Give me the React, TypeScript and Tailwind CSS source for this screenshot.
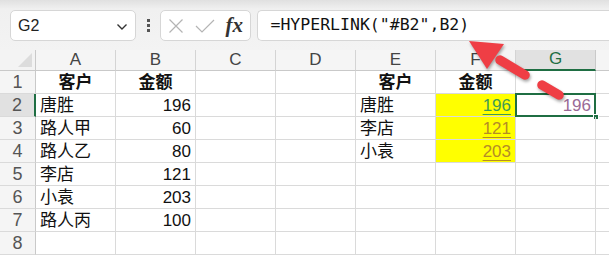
import React from 'react'

type Cell = {
  text?: string
  align?: 'left' | 'right' | 'center'
  bold?: boolean
  color?: string
  underline?: boolean
  fill?: string
  selected?: boolean
}

const cols = ['A', 'B', 'C', 'D', 'E', 'F', 'G']

const L = (text: string): Cell => ({ text, align: 'left' })
const R = (text: string): Cell => ({ text, align: 'right' })
const H = (text: string): Cell => ({ text, align: 'center', bold: true })

const rows: Cell[][] = [
  [H('客户'), H('金额'), {}, {}, H('客户'), H('金额'), {}],
  [
    L('唐胜'),
    R('196'),
    {},
    {},
    L('唐胜'),
    { text: '196', align: 'right', color: 'text-[#3f9a56]', underline: true, fill: 'bg-[#ffff00]' },
    { text: '196', align: 'right', color: 'text-[#9a6a96]', selected: true },
  ],
  [
    L('路人甲'),
    R('60'),
    {},
    {},
    L('李店'),
    { text: '121', align: 'right', color: 'text-[#b58c26]', underline: true, fill: 'bg-[#ffff00]' },
    {},
  ],
  [
    L('路人乙'),
    R('80'),
    {},
    {},
    L('小袁'),
    { text: '203', align: 'right', color: 'text-[#b58c26]', underline: true, fill: 'bg-[#ffff00]' },
    {},
  ],
  [L('李店'), R('121'), {}, {}, {}, {}, {}],
  [L('小袁'), R('203'), {}, {}, {}, {}, {}],
  [L('路人丙'), R('100'), {}, {}, {}, {}, {}],
  [{}, {}, {}, {}, {}, {}, {}],
]

function GridCell({ cell }: { cell: Cell }) {
  const justify =
    cell.align === 'right' ? 'justify-end pr-[4px]' : cell.align === 'center' ? 'justify-center' : 'justify-start pl-[4px]'
  return (
    <div
      className={`relative flex h-[23px] items-center border-r border-b border-[#dadada] ${justify} ${cell.fill ?? ''}`}
    >
      {cell.text && (
        <span
          className={`leading-[23px] ${cell.bold ? 'font-bold' : ''} ${cell.color ?? 'text-[#111]'} ${
            cell.underline ? 'underline decoration-1 underline-offset-[3px]' : ''
          }`}
        >
          {cell.text}
        </span>
      )}
      {cell.selected && (
        <>
          <div className="pointer-events-none absolute -top-[1px] -left-[1px] right-[-1px] bottom-[-1px] border-2 border-[#1f6e43]" />
          <div className="absolute right-[-4px] bottom-[-4px] h-[6px] w-[6px] border border-white bg-[#1f6e43]" />
        </>
      )}
    </div>
  )
}

function FormulaBar() {
  return (
    <div className="flex h-[50px] items-start bg-gradient-to-b from-[#e0e0e0] via-[#f0f0f0] via-[18%] to-[#f3f3f3] pt-[10px]">
      <div className="ml-[10px] flex h-[31px] w-[126px] items-center justify-between rounded-[5px] border border-[#d6d6d6] bg-white pr-[7px] pl-[7px]">
        <span className="text-[16px] text-[#222]">G2</span>
        <svg width="12" height="8" viewBox="0 0 12 8" className="mt-[3px]">
          <path d="M1.5 1.5 L6 6 L10.5 1.5" fill="none" stroke="#333" strokeWidth="1.4" />
        </svg>
      </div>
      <div className="mt-[9px] ml-[11px] flex flex-col gap-[2.5px]">
        <span className="h-[2.5px] w-[2.5px] bg-[#555]" />
        <span className="h-[2.5px] w-[2.5px] bg-[#555]" />
        <span className="h-[2.5px] w-[2.5px] bg-[#555]" />
      </div>
      <div className="ml-[10px] flex h-[31px] w-[91px] items-center rounded-[5px] border border-[#d6d6d6] bg-white">
        <svg width="16" height="16" viewBox="0 0 16 16" className="ml-[7px]">
          <path d="M1.5 1.5 L14.5 14.5 M14.5 1.5 L1.5 14.5" stroke="#b4b4b4" strokeWidth="1.2" fill="none" />
        </svg>
        <svg width="20" height="14" viewBox="0 0 20 14" className="ml-[11px]">
          <path d="M1 7 L7 13 L19 1" stroke="#b4b4b4" strokeWidth="1.2" fill="none" />
        </svg>
        <span className="ml-[11px] font-['Liberation_Serif',serif] text-[21px] leading-none font-bold text-[#333] italic">
          fx
        </span>
      </div>
      <div className="ml-[6px] flex h-[31px] flex-1 items-center rounded-l-[5px] border border-r-0 border-[#d6d6d6] bg-white pl-[13px]">
        <span className="font-['DejaVu_Sans_Mono',monospace] text-[16.5px] text-[#111]">=HYPERLINK("#B2",B2)</span>
      </div>
    </div>
  )
}

export default function App() {
  return (
    <div className="relative h-[256px] w-[609px] overflow-hidden bg-white font-['Liberation_Sans','Noto_Sans_CJK_SC',sans-serif] text-[17px]">
      <FormulaBar />
      <div className="grid grid-cols-[36px_repeat(7,80px)_1fr]">
        <div className="relative h-[21px] border-r border-b border-[#c9c9c9] bg-[#f3f3f3]">
          <svg width="14" height="14" viewBox="0 0 14 14" className="absolute right-[3px] bottom-[3px]">
            <path d="M14 0 L14 14 L0 14 Z" fill="#dcdcdc" />
          </svg>
        </div>
        {cols.map((c) => (
          <div
            key={c}
            className={`flex h-[21px] items-end justify-center border-b text-[17px] leading-[20px] ${
              c === 'G'
                ? 'border-r border-r-[#c9c9c9] border-b-2 border-b-[#1f6e43] bg-[#e1e1e1] text-[#1f6e43]'
                : 'border-r border-[#d4d4d4] border-b-[#c9c9c9] bg-[#f5f5f5] text-[#444]'
            }`}
          >
            {c}
          </div>
        ))}
        <div className="h-[21px] border-b border-[#c9c9c9] bg-[#f5f5f5]" />
        {rows.map((row, i) => (
          <React.Fragment key={i}>
            <div
              className={`flex h-[23px] items-center justify-center border-b border-[#dadada] text-[18px] text-[#555] ${
                i === 1 ? 'border-r-2 border-r-[#1f6e43] bg-[#e1e1e1]' : 'border-r border-r-[#c9c9c9] bg-[#f5f5f5]'
              }`}
            >
              {i + 1}
            </div>
            {row.map((cell, j) => (
              <GridCell key={j} cell={cell} />
            ))}
            <div className="h-[23px] border-b border-[#dadada]" />
          </React.Fragment>
        ))}
      </div>
      {/* red dashed annotation arrow */}
      <svg
        width="609"
        height="256"
        viewBox="0 0 609 256"
        className="pointer-events-none absolute top-0 left-0 drop-shadow-[1px_2px_1.5px_rgba(0,0,0,0.35)]"
      >
        <g stroke="#ef3e45" strokeWidth="9.5" strokeLinecap="round">
          <line x1="500" y1="60" x2="525" y2="75" />
          <line x1="542" y1="85" x2="559" y2="95" />
        </g>
        <polygon points="469,41 504,44 487,69" fill="#ef3e45" />
      </svg>
    </div>
  )
}
